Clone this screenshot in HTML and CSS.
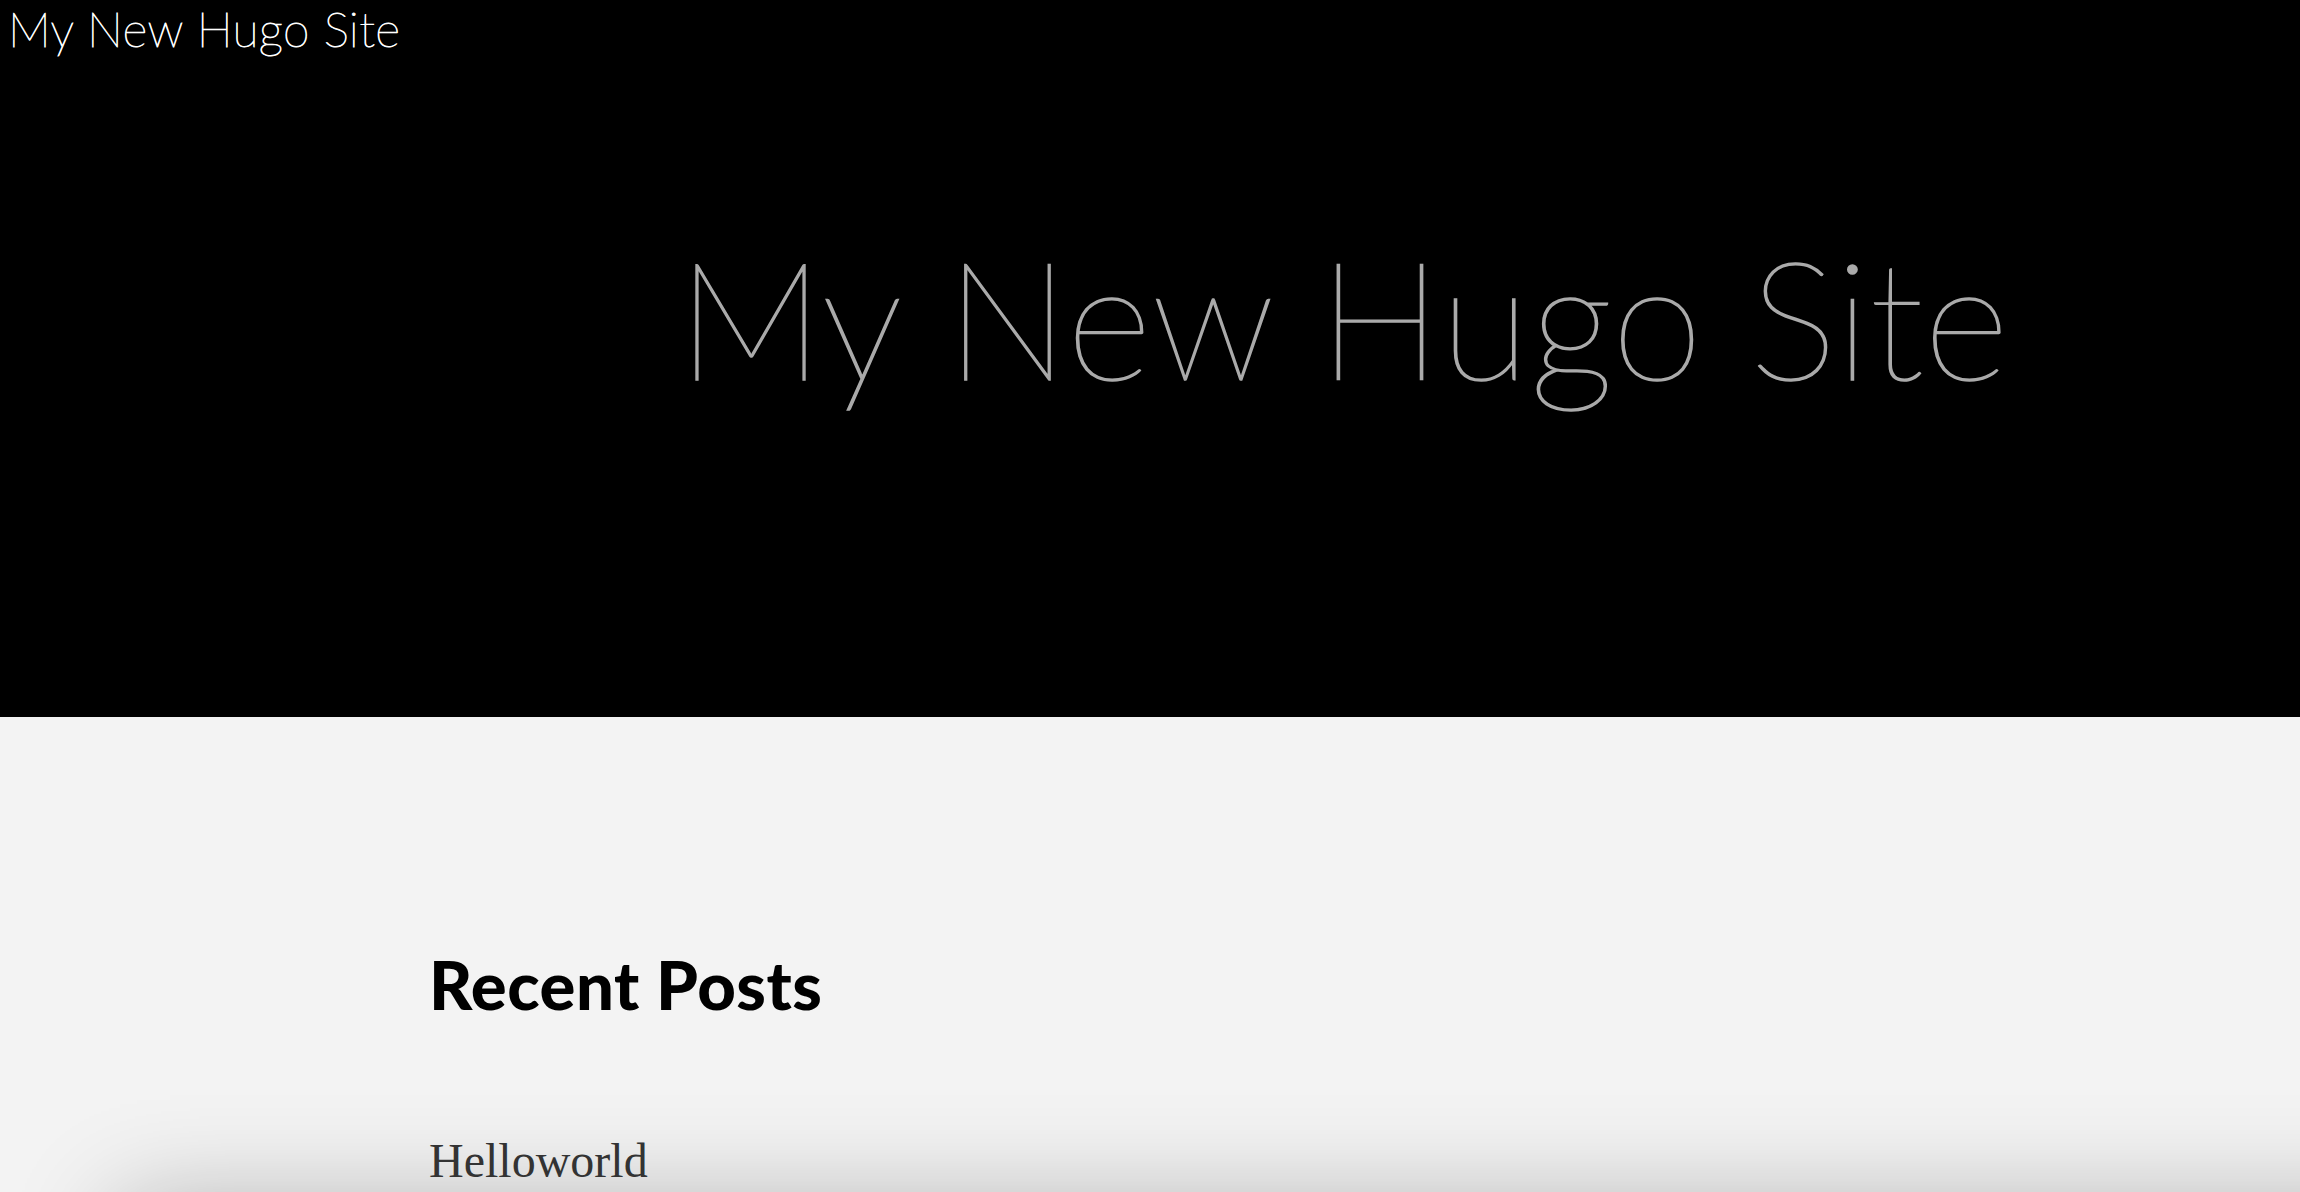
FILE: index.html
```html
<!DOCTYPE html>
<html lang="en">
<head>
<meta charset="utf-8">
<title>My New Hugo Site</title>
<link rel="stylesheet" href="styles.css">
</head>
<body>
<div class="page">
  <header class="site-header">
    <a class="site-name" href="#">My New Hugo Site</a>
    <h1 class="hero-title">My New Hugo Site</h1>
  </header>
  <main class="content">
    <h2 class="section-title">Recent Posts</h2>
    <a class="post-link" href="#">Helloworld</a>
  </main>
  <section class="post-card"></section>
</div>
</body>
</html>
```

FILE: styles.css
```css
html, body {
  margin: 0;
  padding: 0;
}
body {
  background: #f3f3f3;
  overflow: hidden;
  height: 1192px;
}
.page {
  overflow: hidden;
}
.site-header {
  background: #000;
  height: 717px;
  display: flex;
  flex-direction: column;
}
.site-name {
  font-family: "Lato", sans-serif;
  font-weight: 100;
  font-size: 48px;
  line-height: 1.2;
  color: #fff;
  -webkit-text-stroke: 0.9px #fff;
  text-decoration: none;
  padding-left: 8px;
  letter-spacing: 0.3px;
  align-self: flex-start;
}
.hero-title {
  font-family: "Lato", sans-serif;
  font-weight: 100;
  font-size: 165px;
  line-height: 1;
  color: #aaa;
  -webkit-text-stroke: 1.6px #aaa;
  margin: 176px 0 0 0;
  padding-left: 677px;
  white-space: nowrap;
}
.content {
  padding: 234px 0 0 429px;
  display: flex;
  flex-direction: column;
  align-items: flex-start;
}
.section-title {
  font-family: "Lato", sans-serif;
  font-weight: 900;
  font-size: 67px;
  line-height: 1;
  letter-spacing: 0.5px;
  color: #000;
  margin: 0;
}
.post-link {
  font-family: "Liberation Serif", serif;
  font-size: 48px;
  line-height: 1.2;
  color: #333;
  text-decoration: none;
  margin-top: 114px;
}
.post-card {
  margin: 19px -300px 0 120px;
  height: 600px;
  background: #f3f3f3;
  box-shadow: 0 0 100px rgba(0, 0, 0, 0.3);
}
```
